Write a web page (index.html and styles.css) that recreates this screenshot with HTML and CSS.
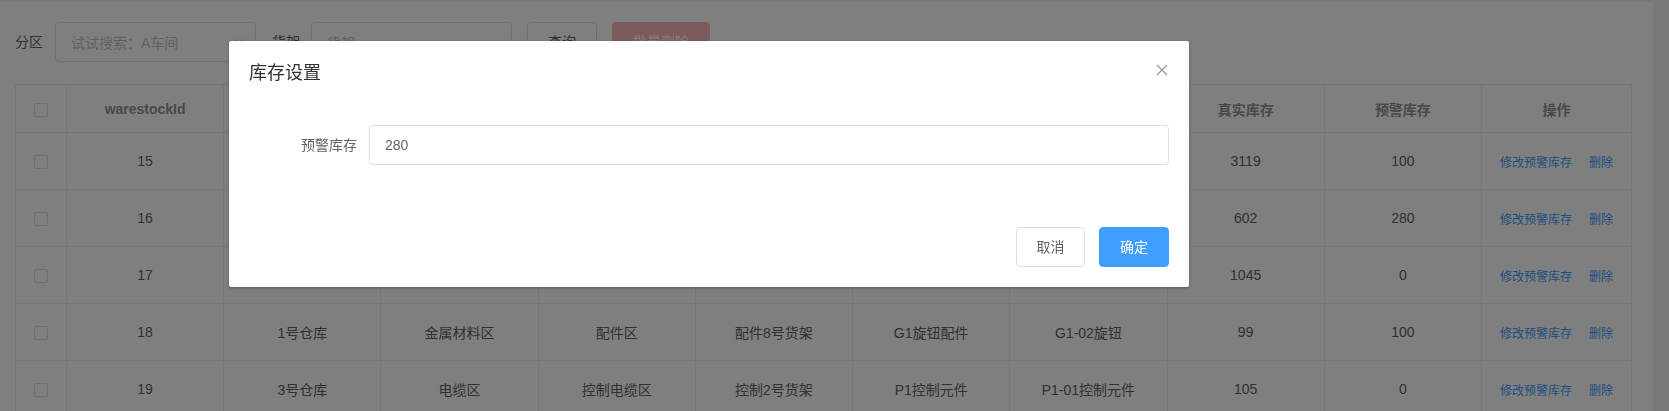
FILE: index.html
```html
<!DOCTYPE html>
<html lang="zh-CN">
<head>
<meta charset="utf-8">
<title>库存管理</title>
<link rel="stylesheet" href="styles.css">
</head>
<body>
<div class="page">
  <div class="card">
    <div class="filters">
      <div class="form-item">
        <label class="form-label">分区</label>
        <div class="select">
          <span class="placeholder">试试搜索：A车间</span>
          <svg class="arrow" width="12" height="12" viewBox="0 0 12 12"><path d="M2 4l4 4 4-4" fill="none" stroke="#c0c4cc" stroke-width="1.3"/></svg>
        </div>
      </div>
      <div class="form-item">
        <label class="form-label">货架</label>
        <div class="input"><span class="placeholder">货架</span></div>
      </div>
      <button class="btn">查询</button>
      <button class="btn btn-danger-disabled">批量删除</button>
    </div>

    <table class="grid">
      <colgroup>
        <col class="c-check"><col><col><col><col><col><col><col><col><col><col class="c-op">
      </colgroup>
      <thead>
        <tr>
          <th><span class="checkbox"></span></th>
          <th>warestockId</th>
          <th>仓库</th>
          <th>分区</th>
          <th>区域</th>
          <th>货架</th>
          <th>物料类别</th>
          <th>物料名称</th>
          <th>真实库存</th>
          <th>预警库存</th>
          <th>操作</th>
        </tr>
      </thead>
      <tbody>
        <tr>
          <td><span class="checkbox"></span></td>
          <td>15</td><td>2号仓库</td><td>金属材料区</td><td>配件区</td><td>配件3号货架</td><td>G1旋钮配件</td><td>G1-01旋钮</td>
          <td>3119</td><td>100</td>
          <td><a class="link">修改预警库存</a><a class="link">删除</a></td>
        </tr>
        <tr>
          <td><span class="checkbox"></span></td>
          <td>16</td><td>1号仓库</td><td>电缆区</td><td>控制电缆区</td><td>控制1号货架</td><td>P1控制元件</td><td>P1-02控制元件</td>
          <td>602</td><td>280</td>
          <td><a class="link">修改预警库存</a><a class="link">删除</a></td>
        </tr>
        <tr>
          <td><span class="checkbox"></span></td>
          <td>17</td><td>3号仓库</td><td>金属材料区</td><td>配件区</td><td>配件5号货架</td><td>G2旋钮配件</td><td>G2-01旋钮</td>
          <td>1045</td><td>0</td>
          <td><a class="link">修改预警库存</a><a class="link">删除</a></td>
        </tr>
        <tr>
          <td><span class="checkbox"></span></td>
          <td>18</td><td>1号仓库</td><td>金属材料区</td><td>配件区</td><td>配件8号货架</td><td>G1旋钮配件</td><td>G1-02旋钮</td>
          <td>99</td><td>100</td>
          <td><a class="link">修改预警库存</a><a class="link">删除</a></td>
        </tr>
        <tr>
          <td><span class="checkbox"></span></td>
          <td>19</td><td>3号仓库</td><td>电缆区</td><td>控制电缆区</td><td>控制2号货架</td><td>P1控制元件</td><td>P1-01控制元件</td>
          <td>105</td><td>0</td>
          <td><a class="link">修改预警库存</a><a class="link">删除</a></td>
        </tr>
      </tbody>
    </table>
  </div>
</div>

<div class="v-modal"></div>

<div class="dialog">
  <div class="dialog-header">
    <span class="dialog-title">库存设置</span>
    <button class="dialog-close" aria-label="关闭">
      <svg width="12" height="12" viewBox="0 0 12 12"><path d="M1 1l10 10M11 1L1 11" stroke="#909399" stroke-width="1.2" fill="none"/></svg>
    </button>
  </div>
  <div class="dialog-body">
    <div class="dlg-form-item">
      <label class="dlg-label">预警库存</label>
      <div class="dlg-input">280</div>
    </div>
  </div>
  <div class="dialog-footer">
    <button class="btn">取消</button>
    <button class="btn btn-primary">确定</button>
  </div>
</div>
</body>
</html>
```

FILE: styles.css
```css
* { box-sizing: border-box; }

html, body {
  margin: 0;
  padding: 0;
  height: 100%;
  overflow: hidden;
}

body {
  font-family: "Liberation Sans", "Noto Sans CJK SC", sans-serif;
  font-size: 14px;
  color: #606266;
  background: #f0f2f5;
}

.page {
  padding-top: 2px;
  width: 1653px;
}

.card {
  background: #fff;
  border-radius: 0 4px 0 0;
  padding: 20px 21px 0 15px;
  height: 420px;
}

.filters {
  display: flex;
  align-items: center;
  height: 40px;
  margin-bottom: 22px;
}

.form-item {
  display: flex;
  align-items: center;
  margin-right: 15px;
}

.form-label {
  color: #606266;
  padding-right: 12px;
  line-height: 40px;
}

.form-item + .form-item .form-label { padding-left: 1px; padding-right: 11px; }

.select, .input {
  width: 201px;
  height: 40px;
  border: 1px solid #dcdfe6;
  border-radius: 4px;
  display: flex;
  align-items: center;
  padding: 0 15px;
  justify-content: space-between;
}

.placeholder { color: #c0c4cc; }

.arrow { margin-right: -5px; }

.btn {
  font-family: inherit;
  font-size: 14px;
  height: 40px;
  padding: 0 20px;
  border: 1px solid #dcdfe6;
  border-radius: 4px;
  background: #fff;
  color: #606266;
  line-height: 1;
  margin: 0 15px 0 0;
}

.btn-danger-disabled {
  background: #fab6b6;
  border-color: #fab6b6;
  color: #fff;
}

.btn-primary {
  background: #409eff;
  border-color: #409eff;
  color: #fff;
}

.grid {
  width: 1617px;
  table-layout: fixed;
  border-collapse: collapse;
  border: 1px solid #ebeef5;
}

.c-check { width: 51px; }
.c-op { width: 150px; }

.grid th, .grid td {
  border: 1px solid #ebeef5;
  text-align: center;
  padding: 0;
  white-space: nowrap;
  overflow: hidden;
}

.grid th {
  height: 48px;
  color: #909399;
  font-weight: bold;
}

.grid td {
  height: 57px;
  color: #606266;
}

.checkbox {
  display: inline-block;
  width: 14px;
  height: 14px;
  border: 1px solid #dcdfe6;
  border-radius: 2px;
  background: #fff;
  vertical-align: middle;
}

.link {
  color: #409eff;
  font-size: 12px;
  cursor: pointer;
}

.link + .link { margin-left: 17px; }

.v-modal {
  position: fixed;
  inset: 0;
  background: rgba(0, 0, 0, 0.5);
}

.dialog {
  position: absolute;
  left: 229px;
  top: 41px;
  width: 960px;
  background: #fff;
  border-radius: 2px;
  box-shadow: 0 1px 3px rgba(0, 0, 0, 0.3);
}

.dialog-header {
  position: relative;
  padding: 20px 20px 10px;
}

.dialog-title {
  font-size: 18px;
  line-height: 24px;
  color: #303133;
}

.dialog-close {
  position: absolute;
  top: 23px;
  right: 21px;
  border: 0;
  background: none;
  padding: 0;
  width: 12px;
  height: 12px;
  display: flex;
}

.dialog-body {
  padding: 30px 20px;
}

.dlg-form-item {
  display: flex;
  align-items: center;
  margin-bottom: 22px;
}

.dlg-label {
  width: 120px;
  text-align: right;
  padding-right: 12px;
  color: #606266;
  line-height: 40px;
}

.dlg-input {
  flex: 1;
  height: 40px;
  border: 1px solid #dcdfe6;
  border-radius: 4px;
  padding: 0 15px;
  display: flex;
  align-items: center;
  color: #606266;
}

.dialog-footer {
  padding: 10px 20px 20px;
  display: flex;
  justify-content: flex-end;
}

.dialog-footer .btn { margin: 0 0 0 14px; width: 70px; padding: 0; }
.dialog-footer .btn:first-child { width: 69px; }
```
